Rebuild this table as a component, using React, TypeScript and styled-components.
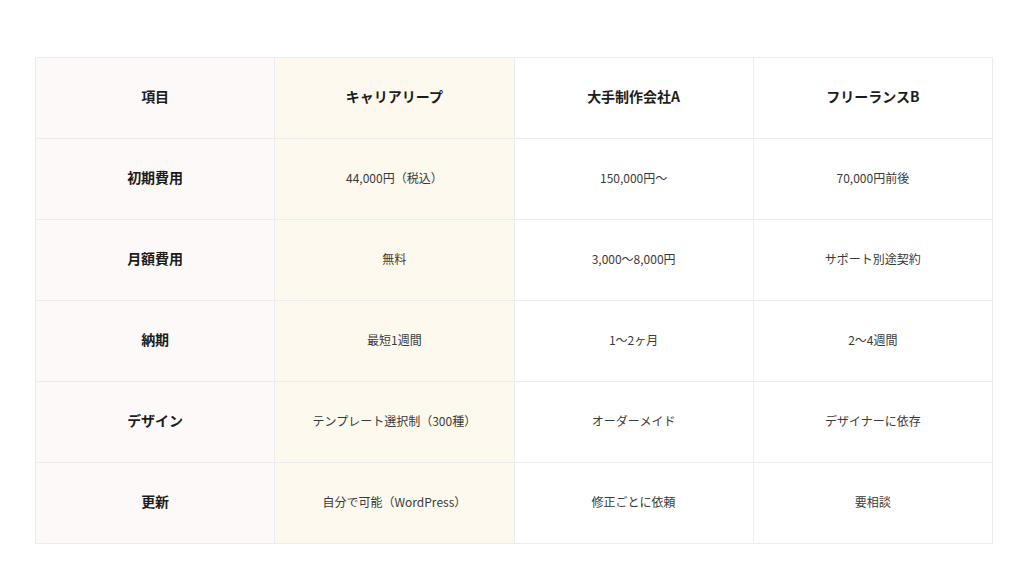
import styled, { createGlobalStyle } from "styled-components";

const GlobalStyle = createGlobalStyle`
  html, body {
    margin: 0;
    padding: 0;
    background: #ffffff;
    font-family: "Noto Sans CJK JP", "Noto Sans", sans-serif;
  }
`;

type Tone = "label" | "highlight" | "plain";

const columns = ["項目", "キャリアリープ", "大手制作会社A", "フリーランスB"];

const rows: string[][] = [
  ["初期費用", "44,000円（税込）", "150,000円〜", "70,000円前後"],
  ["月額費用", "無料", "3,000〜8,000円", "サポート別途契約"],
  ["納期", "最短1週間", "1〜2ヶ月", "2〜4週間"],
  ["デザイン", "テンプレート選択制（300種）", "オーダーメイド", "デザイナーに依存"],
  ["更新", "自分で可能（WordPress）", "修正ごとに依頼", "要相談"],
];

const toneOf = (i: number): Tone =>
  i === 0 ? "label" : i === 1 ? "highlight" : "plain";

export default function App() {
  return (
    <>
      <GlobalStyle />
      <Page>
        <Table>
          <thead>
            <tr>
              {columns.map((c, i) => (
                <HeadCell key={c} tone={toneOf(i)}>
                  {c}
                </HeadCell>
              ))}
            </tr>
          </thead>
          <tbody>
            {rows.map((r) => (
              <tr key={r[0]}>
                {r.map((v, i) =>
                  i === 0 ? (
                    <HeadCell key={i} tone="label">
                      {v}
                    </HeadCell>
                  ) : (
                    <Cell key={i} tone={toneOf(i)}>
                      {v}
                    </Cell>
                  )
                )}
              </tr>
            ))}
          </tbody>
        </Table>
      </Page>
    </>
  );
}

const bg = (tone: Tone) =>
  tone === "label" ? "#fcf9f8" : tone === "highlight" ? "#fdf9ee" : "#ffffff";

const Page = styled.div`
  padding: 57px 31px 34px 35px;
`;

const Table = styled.table`
  width: 958px;
  border-collapse: collapse;
  table-layout: fixed;
  border: 1px solid #ececec;
`;

const HeadCell = styled.th<{ tone: Tone }>`
  background: ${({ tone }) => bg(tone)};
  border: 1px solid #ececec;
  height: 76px;
  padding: 0 0 4px;
  text-align: center;
  font-size: 14px;
  font-weight: 700;
  color: #1c1c1c;
`;

const Cell = styled.td<{ tone: Tone }>`
  background: ${({ tone }) => bg(tone)};
  border: 1px solid #ececec;
  height: 76px;
  padding: 0 0 4px;
  text-align: center;
  font-size: 12px;
  color: #3a3a3a;
`;
